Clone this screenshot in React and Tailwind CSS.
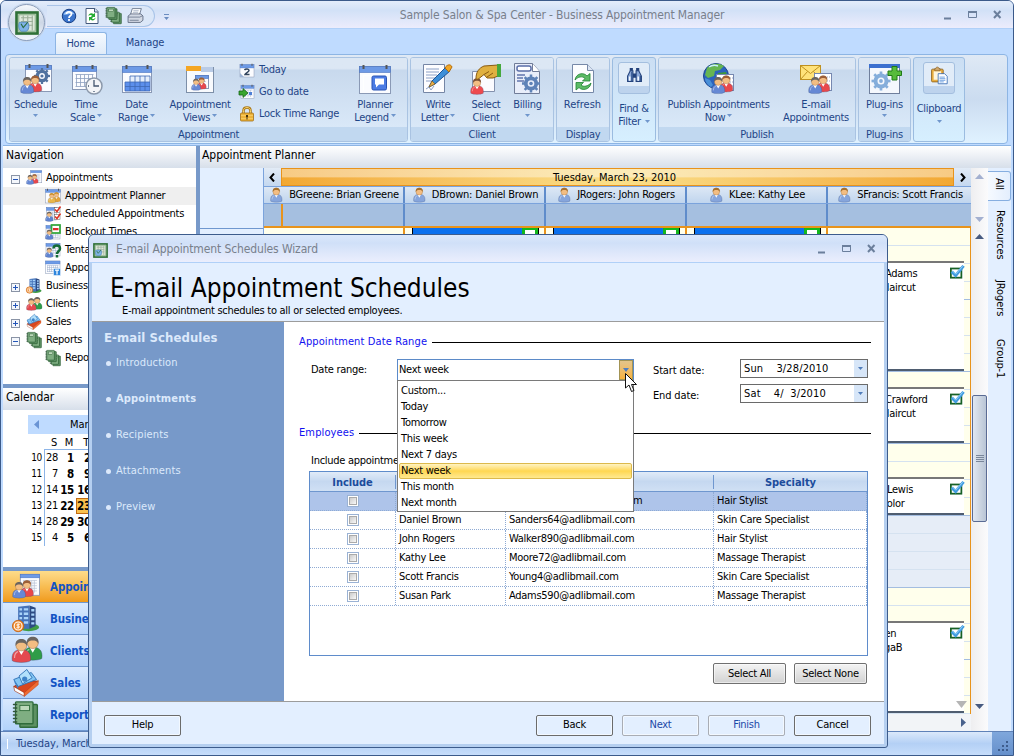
import React from "react";

const HAIR = { brown: "#a8642a", gray: "#6b6560", gold: "#c79a3a" };

function Man({ x = 0, y = 0, s = 1, body = "#5f83cf", hair = HAIR.gray }) {
  return (
    <g transform={`translate(${x} ${y}) scale(${s})`}>
      <path d="M1 19.500C0 13 3 9.500 9 9.500S18 13 17 19.500C14 21.500 4 21.500 1 19.500Z" fill={body} stroke="#34466e" strokeOpacity=".45" strokeWidth=".7" />
      <path d="M6.300 9.800L9 14.500L11.700 9.800Z" fill="#fff" />
      <circle cx="9" cy="6" r="4.800" fill="#f3bd82" stroke="#8c5a30" strokeWidth=".4" />
      <path d="M4 6.500C3.200 1.500 6.500 .3 9 .3S14.800 1.500 14 6.500C12.800 4 11 3.600 9 3.600S5.200 4 4 6.500Z" fill={hair} />
      <path d="M3 17C3 14 4.500 12 6 11.500" stroke="#fff" strokeOpacity=".5" fill="none" />
    </g>
  );
}

function Pair({ x = 0, y = 0, s = 1, a = "#6688d4", b = "#e8484c", hair }) {
  return (
    <g transform={`translate(${x} ${y}) scale(${s})`}>
      <Man x={10} y={-1} body={b} hair={hair || "#9c5f38"} />
      <Man x={0} y={1} body={a} hair={hair || HAIR.gray} />
    </g>
  );
}

function Sheet({ x, y, w, h, top = 5, cell = 4, color = "#8e9fc0", rings = true }) {
  const v = [];
  for (let i = x + 4; i <= x + w - 4; i += cell) v.push(i);
  const hz = [];
  for (let j = y + top + 3; j <= y + h - 3; j += cell) hz.push(j);
  return (
    <g>
      <rect x={x} y={y} width={w} height={h} fill="#fbfcff" stroke="#8a99b5" />
      <rect x={x} y={y} width={w} height={top} fill="#6d9ae6" stroke="#4a74c0" strokeWidth=".6" />
      {v.map((i) => <path key={"v" + i} d={`M${i} ${y + top + 3}V${y + h - 3}`} stroke={color} strokeWidth=".8" />)}
      {hz.map((j) => <path key={"h" + j} d={`M${x + 3} ${j}H${x + w - 3}`} stroke={color} strokeWidth=".8" />)}
      {rings && <path d={`M${x + 4} ${y - 1.5}v4M${x + w - 4} ${y - 1.5}v4`} stroke="#555" strokeWidth="2" />}
    </g>
  );
}

function Gear({ x, y, r, color = "#7c9cc6" }) {
  return (
    <g transform={`translate(${x} ${y})`}>
      <circle r={r * 0.58} fill="none" stroke={color} strokeWidth={r * 0.42} />
      {[0, 45, 90, 135, 180, 225, 270, 315].map((a) => (
        <rect key={a} x={-r * 0.14} y={-r} width={r * 0.28} height={r * 0.36} fill={color} transform={`rotate(${a})`} />
      ))}
      <circle r={r * 0.2} fill={color} />
    </g>
  );
}

function Book({ x = 0, y = 0, s = 1, c = "#2f6b3b" }) {
  return (
    <g transform={`translate(${x} ${y}) scale(${s})`}>
      <rect x="9" y="4" width="20" height="26" rx="1" fill="#5d9163" stroke={c} strokeWidth="1.500" />
      <rect x="4" y="1" width="20" height="25" rx="1" fill="#7fae82" stroke={c} strokeWidth="1.500" />
      <rect x="9" y="5" width="11" height="6" fill="#bcd9bb" stroke={c} />
      {[3, 7, 11, 15, 19, 23].map((j) => <path key={j} d={`M1 ${j + 1}h5`} stroke="#31553a" strokeWidth="1.600" />)}
    </g>
  );
}

function Building() {
  return (
    <g>
      <ellipse cx="19" cy="25.500" rx="12" ry="4.500" fill="#3f9c45" />
      <path d="M7 2L20 .5V27L13 27L7 24Z" fill="#4673b8" />
      <path d="M20 .5L27 3V24L20 27Z" fill="#2c4a83" />
      {[5, 10, 15, 20].map((j) => <path key={j} d={`M8.500 ${j}h3M13.500 ${j}h5M22 ${j + 1}h3.500`} stroke="#a9d4fa" strokeWidth="2.800" />)}
      <circle cx="7" cy="24" r="6.500" fill="#ee8a2c" stroke="#c96514" />
      <circle cx="7" cy="24" r="4.500" fill="none" stroke="#fff" strokeWidth="1.200" />
      <path d="M9 22H6.500C5 22 5 24 7 24S9 26 7.500 26H5M7 21v6" stroke="#fff" fill="none" />
    </g>
  );
}

function Cards() {
  return (
    <g>
      <path d="M2 20L16 13L30 14L14 29Z" fill="#d8481f" stroke="#9c2d0b" />
      <path d="M2 20L14 27V31L3 25Z" fill="#fff" stroke="#9c2d0b" strokeWidth=".7" />
      <path d="M14 27L30 13V18L14 31.500Z" fill="#ef6a31" stroke="#b53a10" strokeWidth=".5" />
      <path d="M2 12L22 4L28 12L7 20Z" fill="#83c5f3" stroke="#2b6fb4" />
      <path d="M8 8L17 .5L23 10L12 17Z" fill="#b2e0fb" stroke="#2b6fb4" />
      <path d="M2 12L7 20V23L3 16Z" fill="#3b82c9" />
      <circle cx="14.500" cy="11.500" r="3" fill="#3e82c8" />
    </g>
  );
}

function Icon({ name, size = 32, className = "" }) {
  const art = {
    schedule: <><Sheet x={5.5} y={2.5} w={26} h={26} top={4} cell={99} color="#fff" /><Gear x={22} y={13} r={8} color="#51729f" /><Pair x={0} y={13} s={0.8} /></>,
    timescale: <><Sheet x={2.5} y={3.5} w={24} h={23} /><circle cx="24" cy="23" r="8" fill="#f3f5f8" stroke="#8b98aa" strokeWidth="1.500" /><path d="M24 17v6h5M18 23h1M24 29v-1" stroke="#44566f" strokeWidth="1.300" fill="none" /></>,
    daterange: <><Sheet x={1.5} y={3.5} w={29} h={26} top={6} cell={99} color="#fff" /><path d="M4 19H29V28H4Z" fill="#5c8fec" /><path d="M9 13H29V19H9Z" fill="#e6effc" /><path d="M4 19H29M4 23.500H29M9 13H29V28H4V19M9 13v15M14 13v15M19 13v15M24 13v15" stroke="#3d68b4" strokeWidth=".8" fill="none" /></>,
    views: <><rect x="2.500" y="4.500" width="27" height="25" fill="#f8fafd" stroke="#7d8fa8" /><path d="M2 3h15v5H2z" fill="#f5a623" /><path d="M17 4h12v5H17z" fill="#b9cbe6" /><Sheet x={11.5} y={12.5} w={13} h={13} top={3} cell={3} rings={false} /><Pair x={7} y={15} s={0.56} /></>,
    legend: <><Sheet x={0.5} y={3.5} w={31} h={27} cell={99} color="#fff" top={6} /><rect x="13" y="13" width="14.500" height="14" rx="1.500" fill="#4c7ce4" stroke="#2853b4" /><path d="M16 15.500h9v6h-5l-3 3v-3h-1z" fill="#fff" /></>,
    write: <><path d="M1.500 1.500h21v28h-21z" fill="#fdfdff" stroke="#7586a5" /><path d="M4 6h13M4 9h13M4 12h11M4 15h9M4 18h7M4 26l3-2 2 3 3-4" stroke="#8ba0c6" fill="none" /><path d="M10 18L24 4L28 8L13 21L7 24Z" fill="#3d8fd8" stroke="#1d5596" /><path d="M10 18l3 3-6 3z" fill="#eab04a" stroke="#8a5b12" strokeWidth=".6" /><path d="M23 5C25 1 29 1 30 4L27 9Z" fill="#f2a725" stroke="#b26e12" /></>,
    select: <><path d="M2.500 8.500h22v20h-22z" fill="#fbfbff" stroke="#8391ad" /><Man x={0} y={15} s={0.78} body="#ee4a4e" hair="#7b5036" /><path d="M6 15.500C6 9 9 5 14 3L28 2V13L23 15H17L14 11.500L9 15.500C8 16.500 6 16.500 6 15.500Z" fill="#e0b040" stroke="#8a5b12" /><path d="M14 11.500l5-3M17 14l6-4" stroke="#8a5b12" fill="none" /><path d="M27 1h4v13h-4z" fill="#46a83d" /></>,
    billing: <><path d="M2.500 .5h18l7 8v22h-25z" fill="#e9eefa" stroke="#707c98" /><path d="M20.500 .5v8h7" fill="#fff" stroke="#707c98" /><rect x="5" y="3" width="14" height="5" rx="2" fill="#fff" stroke="#5a6ea8" strokeWidth="1.500" /><path d="M5 12h8M5 15h6M5 18h7" stroke="#6275ad" strokeWidth="1.500" /><Gear x={19} y={20.5} r={9} color="#5f83b8" /></>,
    refresh: <><path d="M5.500 1.500h15l6 6v22h-21z" fill="#fcfdff" stroke="#7688a8" /><path d="M20.500 1.500v6h6" fill="#dce5f3" stroke="#7688a8" /><path d="M8 17C9 10 17 9 20 13L23 10.500V18H15.500L18 15.500C15 12.500 11 14 8 17Z" fill="#5cbb66" stroke="#208334" strokeWidth=".8" /><path d="M24 20C23 27 15 28 12 24.500L9 27V19.500H16.500L14 22C17 24.500 21 23 24 20Z" fill="#5cbb66" stroke="#208334" strokeWidth=".8" /></>,
    find: <><path d="M3 27V17L8 7h5v20zM19 27V7h5l5 10v10z" fill="#8ba8d8" stroke="#22417b" strokeWidth="2" /><path d="M13 12h6v8h-6z" fill="#22417b" /><path d="M7 2h6v5H7zM19 2h6v5h-6z" fill="#22417b" /><path d="M7 18v8M23 18v8" stroke="#f2f8ff" strokeWidth="3" /><path d="M11 9v18M27 16v11" stroke="#33558f" strokeWidth="2.500" /></>,
    publish: <><circle cx="13" cy="13" r="12.500" fill="#2b63bd" stroke="#1a448e" /><path d="M4 5C8 0 16 -.5 21 3L17 7L12 8L11 13L5 15L2 12Z" fill="#66b552" /><path d="M15 10l8-1 2 6-6 8-4-4z" fill="#3e9a38" /><path d="M2 15l5 2 3 5-2 2C4 22 2 18 2 15z" fill="#488fd8" /><path d="M6 4C9 2 12 2 15 3" stroke="#c8efff" strokeWidth="1.500" fill="none" /><rect x="13.500" y="11.500" width="17" height="16" fill="#fff" stroke="#7688b0" /><path d="M25 15h5M25 19h5M25 23h5" stroke="#9ba8c4" strokeDasharray="1 1" /><Pair x={8} y={13} s={0.8} /></>,
    email: <><rect x=".5" y="2.500" width="20" height="14" fill="#ffe27a" stroke="#bf9120" /><path d="M.5 2.500l10 8 10-8M.5 16.500l7-8M20.500 16.500l-7-8" fill="none" stroke="#bf9120" /><rect x="14.500" y="10.500" width="17" height="17" fill="#fff" stroke="#7688b0" /><path d="M27 14h4M27 18h4M27 22h4" stroke="#9ba8c4" strokeDasharray="1 1" /><Pair x={8} y={13} s={0.8} /></>,
    plugin: <><rect x=".5" y="1.500" width="30" height="29" fill="#f5f8fd" stroke="#6f7f9c" /><path d="M0 1h31v4H0z" fill="#3c70cf" /><Gear x={12} y={18} r={9.5} color="#85aedb" /><path d="M23 3.500h5v4.500h4.500v4.500h-4.500v4.500h-5v-4.500h-4V8h4z" fill="#57bb3c" stroke="#1f7a17" /></>,
    clip: <><rect x="1" y="4" width="22" height="24" rx="2" fill="#e8ad3f" stroke="#8a5d16" strokeWidth="1.500" /><rect x="5" y="8" width="14" height="16" fill="#fdf5dd" /><path d="M7 7V3h2c0-4 6-4 6 0h2v4z" fill="#cfa76b" stroke="#7b5216" /><path d="M13.500 12.500h12l5 5v14h-17z" fill="#fff" stroke="#2f64b0" strokeWidth="1.500" /><path d="M16 19h10M16 22h11M16 25h11M16 28h8" stroke="#4f8bd9" strokeWidth="1.500" /></>,
    today: <><Sheet x={2} y={5} w={28} h={25} top={7} cell={99} color="#fff" /><path d="M11 16c2-3 9-3 9 1 0 3-7 5-8 8h9" fill="none" stroke="#33465f" strokeWidth="3" /><path d="M2 30v-8l8 8z" fill="#9cb3d6" /></>,
    goto: <><Sheet x={4} y={3} w={26} h={26} top={6} cell={5} /><path d="M0 14h8V9l10 9-10 9v-5H0z" fill="#39a52f" stroke="#146213" strokeWidth="1.500" /><path d="M20 16h6v6h-6z" fill="#4f80d6" /></>,
    lock: <><path d="M9 15V9c0-8 14-8 14 0v6" fill="none" stroke="#a87516" strokeWidth="5" /><path d="M9 15V9c0-8 14-8 14 0v6" fill="none" stroke="#f7d36b" strokeWidth="2" /><rect x="3" y="14" width="26" height="16" rx="2" fill="#eeb43a" stroke="#9c6a12" strokeWidth="1.500" /><path d="M4 19h24M4 25h24" stroke="#ffde83" /><path d="M14 18h4v4h-1v5h-2v-5h-1z" fill="#46310a" /></>,
    help: <><circle cx="16" cy="16" r="13.500" fill="#3a74cc" stroke="#173f85" strokeWidth="2" /><path d="M5 13C7 4 25 4 27 13C20 9 12 15 5 13Z" fill="#9cc5f5" /><path d="M11 12c0-6 10-6 10 0 0 4-5 3-5 8M16 22v4" stroke="#fff" strokeWidth="3.500" fill="none" /></>,
    qrefresh: <><path d="M4 1h18l6 6v24H4z" fill="#fff" stroke="#42587b" strokeWidth="2" /><path d="M21 1v7h7" fill="#dde6f2" stroke="#42587b" strokeWidth="2" /><path d="M9 16c0-5 6-7 10-4l3-2v8h-8l2-3c-2-2-5-1-7 1zM23 19c0 5-6 8-10 4l-3 3v-8h8l-2 3c2 2 5 1 7-2z" fill="#27ac34" /></>,
    book: <Book />,
    books: <><Book x={9} y={9} s={0.75} c="#1f5228" /><Book x={0} y={0} s={0.78} c="#1f5228" /></>,
    printer: <><path d="M10 3h17l-4 13H6z" fill="#fff" stroke="#58667e" strokeWidth="1.500" /><path d="M12 7h10M11 10h10" stroke="#9aa8bf" strokeWidth="1.500" /><path d="M2 17l5-4h19l4 4v8l-5 4H2z" fill="#d3d9e4" stroke="#515d75" strokeWidth="1.500" /><path d="M2 19h22l6-3M5 25h17" stroke="#667289" strokeWidth="1.500" fill="none" /></>,
    planner: <><Sheet x={1} y={3} w={30} h={27} top={6} cell={99} color="#fff" /><Pair x={5} y={9} s={0.95} a="#e9b64a" b="#e3a339" hair="#c98e2b" /></>,
    scheduled: <><Sheet x={3} y={3} w={20} h={25} top={6} cell={4} rings={false} /><rect x="19" y="3" width="11" height="10" fill="#fff" stroke="#555" /><rect x="19" y="17" width="11" height="10" fill="#fff" stroke="#555" /><path d="M20 7l4 4 7-10M20 21l4 4 7-10" stroke="#de3022" strokeWidth="3" fill="none" /><Man x={0} y={11} s={0.95} /></>,
    blockout: <><Sheet x={2} y={3} w={28} h={27} top={6} cell={5} rings={false} /><rect x="13" y="2" width="17" height="16" fill="#fff" stroke="#33a63b" strokeWidth="3.500" /><path d="M16 10h11" stroke="#e02c2c" strokeWidth="4.500" /><Man x={0} y={11} s={0.95} /></>,
    tentative: <><Sheet x={2} y={3} w={28} h={25} top={6} cell={5} rings={false} /><Man x={0} y={11} s={0.95} /><path d="M17 13c0-8 13-8 13 0 0 6-6 5-6 11M24 26v5" stroke="#166b37" strokeWidth="5" fill="none" /></>,
    templates: <><Sheet x={1} y={2} w={29} h={25} top={6} cell={4} rings={false} /><rect x="17" y="17" width="14" height="14" fill="#2f86dd" stroke="#fff" /><path d="M20 20h8M24 20v9" stroke="#fff" strokeWidth="2.500" /></>,
    appts: <><Sheet x={9.5} y={1.5} w={22} h={24} top={4} cell={3} rings={false} color="#b6c0d4" /><Pair x={0} y={9} s={0.9} /></>,
    building: <Building />,
    clients: <Pair x={0} y={3} s={1.18} a="#e4494f" b="#2f9c48" hair={HAIR.gray} />,
    clientsbig: <Pair x={-1} y={0.5} s={1.3} a="#e4494f" b="#2f9c48" hair={HAIR.gray} />,
    cards: <Cards />,
    person: <Man x={4} y={1} s={1.4} hair="#a8712d" body="#86a5dc" />,
    app: <><rect x="2" y="2" width="28" height="28" fill="#dfe8dc" stroke="#2f7037" strokeWidth="3.500" /><rect x="5" y="5" width="22" height="22" fill="none" stroke="#8fb58c" strokeWidth="1.500" /><path d="M8 9h16M8 14h16M8 19h16M11 6v20M17 6v20M23 6v20" stroke="#9caf98" strokeWidth="1.500" /><path d="M6 15h11c3 5 1 11-2 12H8c-3-2-4-8-2-12z" fill="#7fb3e6" stroke="#4680ba" /><path d="M8 17l3 5 6-7" stroke="#286b3d" strokeWidth="1.500" fill="none" /></>,
    check: <><rect x="2" y="8" width="24" height="21" fill="#fff" stroke="#176126" strokeWidth="4" /><path d="M4 15l9 9L31 2" stroke="#3f9be0" strokeWidth="7" fill="none" /><path d="M6 14l7 7L29 3" stroke="#a6dbfb" strokeWidth="2" fill="none" /></>,
  };
  return (
    <svg width={size} height={size} viewBox="0 0 32 32" className={"shrink-0 overflow-visible " + className}>
      {art[name]}
    </svg>
  );
}

function Tri({ dir = "down", w = 7, h = 4, className = "fill-[#6f96cc]" }) {
  const d = {
    down: `M0 0H${w}L${w / 2} ${h}Z`,
    up: `M0 ${h}H${w}L${w / 2} 0Z`,
    left: `M${w} 0V${h}L0 ${h / 2}Z`,
    right: `M0 0V${h}L${w} ${h / 2}Z`,
  }[dir];
  return <svg width={w} height={h} viewBox={`0 0 ${w} ${h}`} className={"shrink-0 " + className}><path d={d} /></svg>;
}

function Big({ icon, l1, l2, arrow, w }) {
  return (
    <div className={"flex h-[69px] shrink-0 flex-col items-center pt-[5px] " + w}>
      <Icon name={icon} />
      <div className="mt-[3px] leading-[13px]">{l1}</div>
      <div className="flex h-[13px] items-center justify-center gap-[2px] leading-[13px]">
        {l2}
        {arrow && <Tri w={5} h={3} className="mb-[5px] fill-[#6f96cc]" />}
      </div>
    </div>
  );
}

function Group({ title, w, children }) {
  return (
    <div className={"flex h-[85px] shrink-0 flex-col overflow-hidden rounded-[3px] border border-[#a9c3e2] shadow-[inset_1px_1px_0_#eef5fc] " + w}>
      <div className="flex h-[69px] bg-linear-to-b from-[#dce7f4] from-15% via-[#c8d9ed] via-18% to-[#d9e8f8]">{children}</div>
      <div className="h-[14px] bg-[#c1d8f0] text-center leading-[15px]">{title}</div>
    </div>
  );
}

function Collapsed({ icon, l1, l2, w }) {
  return (
    <div className={"flex h-[85px] shrink-0 flex-col items-center rounded-[3px] border border-[#9bbce0] bg-linear-to-b from-[#cbdef3] to-[#d6efff] pt-[4px] " + w}>
      <div className="flex h-8 w-8 items-start justify-center rounded-[3px] border border-[#a4bfdf] bg-linear-to-b from-[#e1ecf8] from-75% to-[#bdd3ed] to-76% pt-[4px]">
        <Icon name={icon} size={17} />
      </div>
      <div className="mt-[8px] leading-[13px]">{l1}</div>
      <div className="flex h-[13px] items-center gap-1 leading-[13px]">{l2}<Tri w={5} h={3} /></div>
    </div>
  );
}

function Caption() {
  return (
    <svg width="60" height="12" viewBox="0 0 60 12" className="fill-none stroke-[#6b7f9c]">
      <path d="M1 9.500h7" strokeWidth="2" />
      <path d="M25.500 2.500h8v6h-8z" strokeWidth="1" /><path d="M25 3h9" strokeWidth="2" />
      <path d="M51 2l6.500 7M57.500 2l-6.500 7" strokeWidth="2" />
    </svg>
  );
}

function Ribbon() {
  return (
    <div className="mr-[5px] ml-[4px] flex h-[90px] gap-[2px] rounded-[4px] border border-[#8db5e4] bg-linear-to-b from-[#dfe9f5] via-[#cbdcf0] to-[#e0f2ff] px-[3px] pt-[2px] text-[#1f4587]">
      <Group title="Appointment" w="w-[399px]">
        <Big icon="schedule" l1="Schedule" arrow w="w-[51px]" />
        <Big icon="timescale" l1="Time" l2="Scale" arrow w="w-[50px]" />
        <Big icon="daterange" l1="Date" l2="Range" arrow w="w-[51px]" />
        <Big icon="views" l1="Appointment" l2="Views" arrow w="w-[76px]" />
        <div className="flex w-[107px] shrink-0 flex-col gap-[6px] pt-1 pl-px">
          {[["today", "Today"], ["goto", "Go to date"], ["lock", "Lock Time Range"]].map(([i, t]) => (
            <div key={t} className="flex h-4 items-center gap-1 whitespace-nowrap"><Icon name={i} size={16} />{t}</div>
          ))}
        </div>
        <Big icon="legend" l1="Planner" l2="Legend" arrow w="w-[60px]" />
      </Group>
      <Group title="Client" w="w-[144px]">
        <Big icon="write" l1="Write" l2="Letter" arrow w="w-[54px]" />
        <Big icon="select" l1="Select" l2="Client" w="w-[42px]" />
        <Big icon="billing" l1="Billing" arrow w="w-[41px]" />
      </Group>
      <Group title="Display" w="w-[54px]"><Big icon="refresh" l1={<span className="tracking-[0px]">Refresh</span>} w="w-[51px]" /></Group>
      <Collapsed icon="find" l1="Find &" l2="Filter" w="w-[44px]" />
      <Group title="Publish" w="w-[198px]">
        <Big icon="publish" l1="Publish Appointments" l2="Now" arrow w="w-[119px] whitespace-nowrap" />
        <Big icon="email" l1="E-mail" l2="Appointments" w="w-[76px]" />
      </Group>
      <Group title="Plug-ins" w="w-[53px]"><Big icon="plugin" l1="Plug-ins" arrow w="w-[51px]" /></Group>
      <Collapsed icon="clip" l1="Clipboard" w="w-[52px]" />
    </div>
  );
}

function PanelTitle({ children }) {
  return <div className="h-[22px] shrink-0 bg-linear-to-b from-white to-[#d7dfea] pl-[3px] text-[12px] leading-[19px] tracking-[-0.05px]">{children}</div>;
}

function Box({ sign }) {
  return (
    <svg width="9" height="9" viewBox="0 0 9 9" className="shrink-0">
      <rect x=".5" y=".5" width="8" height="8" fill="#f4f7fc" stroke="#8a94a6" />
      <path d={sign === "+" ? "M2 4.500h5M4.500 2v5" : "M2 4.500h5"} stroke="#2355b8" />
    </svg>
  );
}

function Tree() {
  const rows = [
    [0, "-", "appts", "Appointments"],
    [1, "", "planner", "Appointment Planner"],
    [1, "", "scheduled", "Scheduled Appointments"],
    [1, "", "blockout", "Blockout Times"],
    [1, "", "tentative", "Tentative"],
    [1, "", "templates", "Appointment"],
    [0, "+", "building", "Business"],
    [0, "+", "clients", "Clients"],
    [0, "+", "cards", "Sales"],
    [0, "-", "books", "Reports"],
    [1, "", "books", "Reports"],
  ];
  return (
    <div className="h-[216px] shrink-0 bg-white pt-[1px]">
      {rows.map(([lv, s, ic, t], i) => (
        <div key={i} className={"flex h-[18px] items-center whitespace-nowrap " + (i === 1 ? "bg-[#efefef]" : "")}>
          <div className={"flex shrink-0 items-center pt-[2px] pl-[8px] " + (lv ? "w-[42px]" : "w-[23px]")}>{s && <Box sign={s} />}</div>
          <Icon name={ic} size={16} className="mr-[4px]" />
          <span className="tracking-[-0.23px]">{t}</span>
        </div>
      ))}
    </div>
  );
}

function MiniCalendar() {
  const rows = [[10, 28, 1, 2], [11, 7, 8, 9], [12, 14, 15, 16], [13, 21, 22, 23], [14, 28, 29, 30], [15, 4, 5, 6]];
  return (
    <div className="h-[157px] shrink-0 bg-white pt-[5px] pl-[25px] text-[12px] tracking-[-0.3px]">
      <div className="flex h-[19px] items-center bg-[#bfdbff] pl-[6px]">
        <Tri dir="left" w={5} h={9} className="fill-[#6a94d4]" />
        <span className="ml-[31px] text-[11px] tracking-[-0.1px]">March 2010</span>
      </div>
      <div className="flex h-[15px] items-center pt-[2px] pl-[13px] text-[11px]">
        {["S", "M", "T"].map((d) => <span key={d} className="w-4 text-right">{d}</span>)}
      </div>
      <div className="flex">
        <div className="w-[16px] pt-px pr-[2px] text-right text-[10px] leading-[16px]">{rows.map((r) => <div key={r[0]}>{r[0]}</div>)}</div>
        <div className="border-t border-l border-[#8db5e8]">
          {rows.map((r) => (
            <div key={r[0]} className="flex h-4 leading-[16px]">
              <span className="w-[13px] text-right text-[11px]">{r[1]}</span>
              <span className="w-[16px] text-right text-[11.500px] font-bold">{r[2]}</span>
              <span className={"ml-[2px] w-[15px] text-right text-[11.500px] font-bold " + (r[3] === 23 ? "border border-[#c26a10] bg-[#f9c04e] leading-[14px]" : "")}>{r[3]}</span>
            </div>
          ))}
        </div>
      </div>
    </div>
  );
}

function NavButtons() {
  return [["appts", "Appointments"], ["building", "Business"], ["clientsbig", "Clients"], ["cards", "Sales"], ["book", "Reports"]].map(([ic, t], i) => (
    <div key={t} className={"flex h-8 shrink-0 items-center border-b border-[#6f97cf] pl-[9px] text-[11.500px] font-bold tracking-[-0.1px] text-[#1253c4] " + (i === 0 ? "bg-linear-to-b from-[#fddc8a] via-[#f8bd52] to-[#f09a17]" : "bg-linear-to-b from-[#d9e9fe] to-[#b3d3fb]")}>
      <Icon name={ic} size={28} className="mr-[10px]" />{t}
    </div>
  ));
}

function Appointment({ top, h, l1, l2, p1, p2 }) {
  return (
    <div className={"absolute left-[4px] w-[132px] border-t-2 border-b-2 border-t-[#777] border-b-[#4f5d70] bg-white " + top + " " + h}>
      <div className={"flex justify-between leading-[14px] " + p1}><span className="pt-[4px]">{l1}</span><Icon name="check" size={14} className="mt-[2px]" /></div>
      <div className={"leading-[14px] " + p2}>{l2}</div>
    </div>
  );
}

function Planner() {
  const people = ["BGreene: Brian Greene", "DBrown: Daniel Brown", "JRogers: John Rogers", "KLee: Kathy Lee", "SFrancis: Scott Francis"];
  const slots = Array.from({ length: 27 }, (_, i) => i);
  return (
    <div className="flex min-w-0 flex-1 flex-col">
      <PanelTitle><span className="-ml-px">Appointment Planner</span></PanelTitle>
      <div className="flex h-[563px]">
        <div className="flex w-[63px] shrink-0 flex-col bg-[#e3efff]"><div className="h-[61px] border-b border-[#6f97cf]" /></div>
        <div className="flex w-[708px] shrink-0 flex-col border-l border-[#7ba3dc]">
          <div className="flex h-[19px] border-b border-[#7ba3dc]">
            <div className="flex w-[17px] items-center justify-center bg-linear-to-b from-[#e2ebf6] to-[#c4d8f0] pr-[2px]"><svg width="6" height="9" viewBox="0 0 6 9"><path d="M5 .5L1.500 4.500L5 8.500" fill="none" stroke="#000" strokeWidth="2" /></svg></div>
            <div className="flex-1 border border-[#e8931c] bg-linear-to-r from-[#f2a832] via-[#fae08a] to-[#f2a832]">
              <div className="h-full bg-linear-to-b from-white/40 from-50% to-white/0 to-55% pr-[6px] text-center leading-[17px] tracking-[-0.03px]">Tuesday, March 23, 2010</div>
            </div>
            <div className="flex w-[17px] items-center justify-center bg-linear-to-b from-[#e2ebf6] to-[#c4d8f0]"><svg width="6" height="9" viewBox="0 0 6 9"><path d="M1 .5L4.500 4.500L1 8.500" fill="none" stroke="#000" strokeWidth="2" /></svg></div>
          </div>
          <div className="flex h-[17px] border-b border-[#7ba3dc] bg-linear-to-b from-[#dde8f5] to-[#c0d5ee]">
            {people.map((p, i) => (
              <div key={p} className={"flex items-center justify-center gap-[5px] tracking-[-0.22px] whitespace-nowrap " + (i < 4 ? "w-[141px] border-r-2 border-[#5f8ccb]" : "flex-1")}><Icon name="person" size={16} />{p}</div>
            ))}
          </div>
          <div className="flex h-[24px] border-b-2 border-[#e8931c] bg-[#a5bfe0]">
            {people.map((p, i) => <div key={p} className={i < 4 ? "flex w-[141px] border-r-2 border-[#5f8ccb]" : "flex-1"}>{i === 0 && <div className="w-[19px] border-r-2 border-[#e8931c]" />}</div>)}
          </div>
          <div className="flex h-[486px] border-b border-[#e8931c] bg-[#ffffec]">
            {people.map((p, i) => (
              <div key={p} className={i < 4 ? "w-[141px] border-r-2 border-[#e8931c] pr-[5px] pl-[7px]" : "relative flex-1 border-r border-[#e8931c]"}>
                {i > 0 && i < 4 && <div className="flex h-4 justify-end border-x border-black bg-[#0a70ee]"><div className="w-4 border-x-3 border-t-2 border-[#12b81d] bg-white" /></div>}
                {i === 4 && slots.map((s) => <div key={s} className={"h-[18px] border-b " + (s % 4 === 3 ? "border-[#a3bde0] " : "border-[#d5e2f0] ") + (s > 15 && s < 20 ? "bg-[#e6edf7]" : "")} />)}
                {i === 4 && <>
                  <Appointment top="top-[33px]" h="h-[110px]" l1="Adams" l2="Haircut" p1="pl-[53px]" p2="pl-[50px]" />
                  <Appointment top="top-[159px]" h="h-[56px]" l1="Crawford" l2="Haircut" p1="pl-[53px]" p2="pl-[50px]" />
                  <Appointment top="top-[249px]" h="h-[38px]" l1="Lewis" l2="Color" p1="pl-[55px]" p2="pl-[48px]" />
                  <Appointment top="top-[393px]" h="h-[92px]" l1="Allen" l2="YogaB" p1="pl-[41px]" p2="pl-[42px]" />
                  <div className="absolute top-[473px] right-[3px]"><Tri w={11} h={7} className="fill-[#b5b5b5]" /></div>
                </>}
              </div>
            ))}
          </div>
          <div className="flex flex-1 items-center justify-end bg-[#f2f4f7] pr-[5px]"><Tri dir="right" w={5} h={9} className="fill-[#4a628c]" /></div>
        </div>
        <div className="flex w-[17px] shrink-0 flex-col items-center bg-linear-to-r from-[#eeeef0] to-[#fbfbfc] pt-[6px]">
          <Tri dir="up" w={9} h={5} className="fill-[#a3b0d0]" />
          <Tri w={9} h={5} className="mt-[38px] fill-[#a3b0d0]" />
          <Tri dir="up" w={9} h={5} className="mt-[12px] fill-[#475a80]" />
          <div className="mt-[156px] flex h-[127px] w-[15px] flex-col items-center justify-center gap-[1px] rounded-[2px] border border-[#5a6b94] bg-linear-to-r from-[#dfe7f2] via-[#cdd6e2] to-[#b9c5d6]">
            {[0, 1, 2, 3].map((n) => <div key={n} className="h-px w-2 bg-[#7a879b]" />)}
          </div>
          <Tri w={9} h={5} className="mt-[182px] fill-[#475a80]" />
        </div>
        <div className="flex flex-1 flex-col items-center bg-[#e3efff] pt-[3px] tracking-[-0.1px]">
          <div className="flex h-[30px] w-full items-center justify-center rounded-r-[3px] border border-l-0 border-[#86aee0] bg-linear-to-r from-[#f6faff] to-[#e3eefd] pb-[4px]"><span className="[writing-mode:vertical-rl]">All</span></div>
          <span className="mt-[9px] h-[52px] [writing-mode:vertical-rl]">Resources</span>
          <span className="mt-[18px] h-[40px] [writing-mode:vertical-rl]">JRogers</span>
          <span className="mt-[19px] [writing-mode:vertical-rl]">Group-1</span>
        </div>
      </div>
    </div>
  );
}

function Legend({ children }) {
  return <div className="flex h-[14px] items-center gap-[5px] leading-[14px] tracking-[0.12px] text-[#1010f0]">{children}<div className="h-px flex-1 bg-black" /></div>;
}

function Btn({ children, kind = "w-[77px] bg-[#e3efff] border-[#6b6b6b] text-black", h = "h-[21px]" }) {
  return <div className={"flex items-center justify-center rounded-[2px] border shadow-[inset_0_0_0_1px_#fff8] " + h + " " + kind}>{children}</div>;
}

function DateField({ children }) {
  return (
    <div className="flex h-[19px] w-[128px] items-center border border-[#6a6a6a] bg-white pl-[3px] tracking-[0.14px] whitespace-pre">
      <span className="flex-1">{children}</span>
      <div className="flex h-[17px] w-[13px] items-center justify-center bg-[#d7e6f8]"><Tri w={5} h={3} className="fill-[#4f7cba]" /></div>
    </div>
  );
}

function Wizard() {
  const steps = ["Introduction", "Appointments", "Recipients", "Attachments", "Preview"];
  const rows = [
    ["", "m", "Hair Stylist"],
    ["Daniel Brown", "Sanders64@adlibmail.com", "Skin Care Specialist"],
    ["John Rogers", "Walker890@adlibmail.com", "Hair Stylist"],
    ["Kathy Lee", "Moore72@adlibmail.com", "Massage Therapist"],
    ["Scott Francis", "Young4@adlibmail.com", "Skin Care Specialist"],
    ["Susan Park", "Adams590@adlibmail.com", "Massage Therapist"],
  ];
  const options = ["Custom...", "Today", "Tomorrow", "This week", "Next 7 days", "Next week", "This month", "Next month"];
  return (
    <div className="absolute top-[233px] left-[87px] flex h-[514px] w-[800px] flex-col rounded-t-[6px] rounded-b-[3px] border border-[#3d5c8c] bg-[#b5cff0] px-[3px] pb-[3px]">
      <div className="-mx-[3px] flex h-[28px] shrink-0 items-center rounded-t-[5px] border-b border-[#b0d0f8] bg-linear-to-b from-[#dbe8fb] via-[#d0e0f8] via-30% to-[#ebeefd] pr-[10px] pl-[4px]">
        <Icon name="app" size={15} className="mt-[4px]" />
        <span className="ml-[8px] flex-1 text-[12px] tracking-[-0.12px] text-[#78808c]">E-mail Appointment Schedules Wizard</span>
        <Caption />
      </div>
      <div className="h-[59px] shrink-0 border-b border-[#9c9c9c] bg-[#e3efff] pt-[9px] pl-[18px]">
        <div className="text-[26px] leading-[32px] tracking-[0px]">E-mail Appointment Schedules</div>
        <div className="pl-[12px] leading-[14px]">E-mail appointment schedules to all or selected employees.</div>
      </div>
      <div className="flex h-[379px] shrink-0">
        <div className="w-[192px] shrink-0 bg-[#7799c9] pt-[7px] pl-[12px] tracking-[0.15px] text-[#dce9fb]">
          <div className="text-[13px] leading-[18px] font-bold tracking-[0.08px]">E-mail Schedules</div>
          {steps.map((s, i) => (
            <div key={s} className={"flex h-9 items-center gap-[5px] pl-[2px] " + (i === 0 ? "-mt-[2px] " : "") + (i === 1 ? "font-bold" : "")}>
              <div className="h-[5px] w-[5px] rounded-full bg-[#dce9fb]" />{s}
            </div>
          ))}
        </div>
        <div className="flex-1 bg-white pt-[13px] pr-[13px] pl-[15px]">
          <Legend>Appointment Date Range</Legend>
          <div className="mt-[10px] flex h-[67px] pl-[12px]">
            <div className="w-[86px] pt-[4px]">Date range:</div>
            <div className="relative w-[237px]">
              <div className="flex h-[22px] items-center border border-[#5b8ac8] bg-white pl-[1px]">
                <span className="flex-1">Next week</span>
                <div className="flex h-[20px] w-[14px] items-center justify-center border border-[#a39455] bg-linear-to-b from-[#e3c58b] to-[#f8b23a]"><Tri w={6} h={4} className="fill-[#507fc0]" /></div>
              </div>
              <div className="absolute top-[21px] left-0 h-[132px] w-[237px] border border-[#7a7a7a] bg-white px-[1px] pt-[2px]">
                {options.map((o) => (
                  <div key={o} className={"flex h-4 items-center rounded-[2px] border pl-px " + (o === "Next week" ? "border-[#dcb94c] bg-linear-to-b from-[#fff3c0] via-[#ffd750] to-[#ffe98f]" : "border-transparent")}>{o}</div>
                ))}
              </div>
              <svg width="12" height="20" viewBox="0 0 12 20" className="absolute top-[14px] left-[228px]"><path d="M.5 .5V15L4 12L6.500 18.500L9 17.500L6.500 11.500H11.500Z" fill="#fff" stroke="#111" /></svg>
            </div>
            <div className="flex w-[106px] flex-col pt-[3px] pl-[19px] leading-[17px] tracking-[-0.15px]"><span>Start date:</span><span className="mt-[8px]">End date:</span></div>
            <div className="flex flex-col gap-[6px]"><DateField>{"Sun    3/28/2010"}</DateField><DateField>{"Sat    4/  3/2010"}</DateField></div>
          </div>
          <Legend>Employees</Legend>
          <div className="mt-[13px] ml-[12px] w-[86px] overflow-hidden leading-[16px] whitespace-nowrap">Include appointme</div>
          <div className="mt-[2px] ml-[10px] h-[185px] w-[559px] border border-[#5f8ccb] bg-white">
            <div className="flex h-[20px] items-center border-b border-[#6f97cf] bg-linear-to-b from-[#e1ebf8] via-[#c5d8f0] to-[#d0e0f4] font-bold tracking-[-0.05px] text-[#1c4c9c]">
              <div className="w-[86px] border-r border-[#6f97cf] pt-px text-center leading-[13px]">Include</div>
              <div className="h-[14px] w-[110px] border-r border-[#6f97cf]" />
              <div className="h-[14px] w-[208px] border-r border-[#6f97cf]" />
              <div className="flex-1 pt-px text-center leading-[13px]">Specialty</div>
            </div>
            {rows.map((r, i) => (
              <div key={i} className={"flex h-[19px] border-b border-dotted border-[#8fabd4] leading-[18px] " + (i === 0 ? "bg-[#aec4ea]" : "")}>
                <div className="flex w-[86px] items-center justify-center border-r border-dotted border-[#8fabd4]"><div className="h-[12px] w-[12px] border border-[#9ab2d4] bg-white p-[1px]"><div className="h-full w-full border border-[#aaa] bg-linear-to-br from-[#ccc] to-[#f8f8f8]" /></div></div>
                <div className="w-[110px] border-r border-dotted border-[#8fabd4] pl-[3px]">{r[0]}</div>
                <div className={"w-[208px] border-r border-dotted border-[#8fabd4] " + (i === 0 ? "pl-[127px]" : "pl-[3px]")}>{r[1]}</div>
                <div className="flex-1 border-r border-dotted border-[#8fabd4] pl-[3px]">{r[2]}</div>
              </div>
            ))}
          </div>
          <div className="mt-[7px] flex justify-end gap-[8px] pr-[4px]">
            <Btn kind="w-[73px] border-[#707070] bg-linear-to-b from-[#f4f4f4] to-[#d2d2d2]">Select All</Btn>
            <Btn kind="w-[73px] border-[#707070] bg-linear-to-b from-[#f4f4f4] to-[#d2d2d2]">Select None</Btn>
          </div>
        </div>
      </div>
      <div className="flex flex-1 items-center gap-[9px] border-t border-[#9c9c9c] bg-[#e3efff] pt-[4px] pr-[13px] pl-[12px]">
        <Btn>Help</Btn>
        <div className="flex-1" />
        <Btn>Back</Btn>
        <Btn kind="w-[77px] bg-[#e3efff] border-[#a9adb5] text-[#1b48a8]">Next</Btn>
        <Btn kind="w-[77px] bg-[#e3efff] border-[#a9adb5] text-[#1b48a8]">Finish</Btn>
        <Btn>Cancel</Btn>
      </div>
    </div>
  );
}

export default function App() {
  return (
    <div className="relative flex h-[756px] w-[1014px] flex-col overflow-hidden rounded-t-[6px] border border-[#3b5a8a] bg-[#bfdbff] font-['DejaVu_Sans_Condensed','DejaVu_Sans',sans-serif] text-[11px] leading-[14px] tracking-[-0.28px] text-black">
      <div className="flex h-[28px] shrink-0 items-center border-b border-[#b0d0f8] bg-linear-to-b from-[#e4edfb] via-[#d2e1f7] via-35% to-[#ececfc] pr-[10px] pl-[46px]">
        <div className="mt-[2px] flex h-[22px] w-[108px] items-center gap-[5px] rounded-r-full border border-l-0 border-[#a9c4e8] bg-[#dbe7f8] pl-[14px]">
          <Icon name="help" size={16} /><Icon name="qrefresh" size={16} className="ml-[2px]" /><Icon name="books" size={17} /><Icon name="printer" size={17} />
        </div>
        <svg width="5" height="6" viewBox="0 0 5 6" className="mt-1 ml-[9px] fill-[#6a8cc0]"><path d="M0 0h5v1H0zM0 3h5L2.500 6z" /></svg>
        <div className="flex-1 pl-[158px] text-center text-[12px] tracking-[-0.13px] text-[#78808c]">Sample Salon &amp; Spa Center - Business Appointment Manager</div>
        <div className="w-[146px]" />
        <Caption />
      </div>
      <div className="absolute top-[3px] left-[7px] flex h-[37px] w-[37px] items-center justify-center rounded-full border border-[#8b9cb8] bg-linear-to-b from-[#f5f8fc] via-[#cdd7e6] to-[#f4f8fd] shadow-[0_0_0_1px_#c5d5ea]"><Icon name="app" size={24} /></div>
      <div className="flex h-[25px] shrink-0 items-end pl-[54px] text-[#1f4587]">
        <div className="flex h-[22px] w-[52px] items-center justify-center rounded-t-[3px] border border-b-0 border-[#8db5e4] bg-linear-to-b from-[#f5faff] to-[#e0ebf8] pr-px">Home</div>
        <div className="flex h-[22px] w-[76px] items-center justify-center tracking-[-0.1px]">Manage</div>
      </div>
      <Ribbon />
      <div className="mx-[2px] mt-px flex h-[586px] shrink-0 border-t border-[#8db5e4] bg-[#7799c9]">
        <div className="flex w-[193px] shrink-0 flex-col overflow-hidden">
          <PanelTitle>Navigation</PanelTitle>
          <Tree />
          <div className="h-[4px] shrink-0 bg-[#7799c9]" />
          <PanelTitle>Calendar</PanelTitle>
          <MiniCalendar />
          <div className="h-[4px] shrink-0 bg-[#7799c9]" />
          <NavButtons />
        </div>
        <div className="w-[4px] shrink-0" />
        <Planner />
      </div>
      <div className="flex flex-1 items-center border-t border-[#5f82b8] bg-linear-to-b from-[#dbe9fb] via-[#b4d0f5] to-[#c6ddfb]">
        <div className="ml-[6px] h-[10px] w-px bg-white" />
        <span className="ml-[8px] flex-1 tracking-[-0.05px] text-[#1f4587]">Tuesday, March 23, 2010</span>
        <div className="flex h-full w-[21px] items-end justify-end bg-linear-to-b from-[#7fa7dc] to-[#6690cb] pr-[4px] pb-[3px]">
          <svg width="11" height="11" viewBox="0 0 11 11" className="fill-[#3d5c8c]"><path d="M8 0h2v2H8zM4 4h2v2H4zM8 4h2v2H8zM0 8h2v2H0zM4 8h2v2H4zM8 8h2v2H8z" /></svg>
        </div>
      </div>
      <Wizard />
    </div>
  );
}
